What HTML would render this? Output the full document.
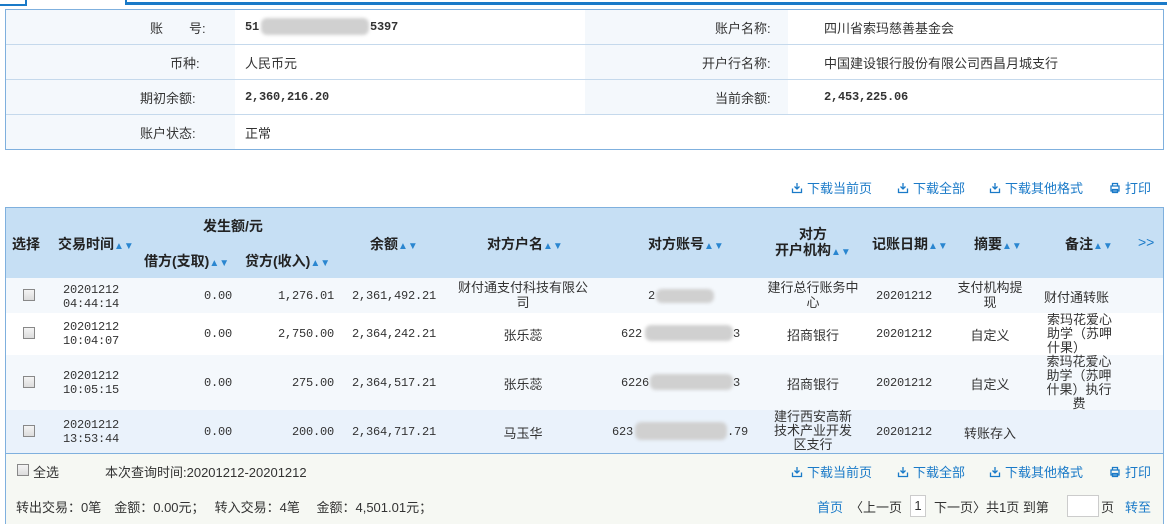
<!DOCTYPE html>
<html><head><meta charset="utf-8"><style>
*{margin:0;padding:0;box-sizing:border-box}
body{width:1167px;height:524px;background:#fff;position:relative;overflow:hidden;font-family:"Liberation Sans","Noto Sans CJK SC",sans-serif;font-size:13px;color:#333}
.a{position:absolute;white-space:nowrap}
.m{font-family:"Liberation Mono","Noto Sans CJK SC",monospace;font-size:12px;letter-spacing:-0.2px}
.b{font-weight:bold}
.lk{color:#1a7ac8}
.lk svg{vertical-align:-1px;margin-right:4px}
.cb{position:absolute;width:12px;height:12px;border:1px solid #888;background:linear-gradient(#f4f4f4,#dcdcdc)}
.blur{position:absolute;background:#d0d0d0;border-radius:6px;filter:blur(1.5px)}
.c{text-align:center}
.r{text-align:right}
.hd{font-weight:bold;color:#222;font-size:14px}
.ar{color:#2a86d0;font-size:10px}
</style></head><body>
<svg width="0" height="0" style="position:absolute">
<defs>
<symbol id="dl" viewBox="0 0 12 12"><path d="M6 1v6M3.5 4.5L6 7l2.5-2.5M1.5 6.5v4h9v-4" fill="none" stroke="#1a7ac8" stroke-width="1.3"/></symbol>
<symbol id="pr" viewBox="0 0 12 12"><path d="M3.5 4V1.5h5V4M2 4h8v5H2zM3.5 7.5h5v3h-5z" fill="none" stroke="#1a7ac8" stroke-width="1.3"/></symbol>
</defs></svg>
<!-- top tabs -->
<div class="a" style="left:0;top:0;width:27px;height:6px;border-right:2px solid #1a7ac8;border-bottom:2px solid #1a7ac8"></div>
<div class="a" style="left:125px;top:0;width:1042px;height:5px;border-left:2px solid #1a7ac8;border-bottom:3px solid #1a7ac8"></div>
<!-- info panel -->
<div class="a" style="left:5px;top:9px;width:1159px;height:141px;border:1px solid #7fb0de;background:#fff"></div>
<div class="a" style="left:6px;top:10px;width:229px;height:139px;background:#f4f8fc"></div>
<div class="a" style="left:585px;top:10px;width:203px;height:104px;background:#f4f8fc"></div>
<div class="a" style="left:6px;top:44px;width:1157px;height:1px;background:#c5d9ec"></div>
<div class="a" style="left:6px;top:79px;width:1157px;height:1px;background:#c5d9ec"></div>
<div class="a" style="left:6px;top:114px;width:1157px;height:1px;background:#c5d9ec"></div>
<div class="a" style="left:150px;top:18px">账　　号:</div>
<div class="a m b" style="left:245px;top:20px">51</div>
<div class="blur" style="left:261px;top:18px;width:108px;height:17px"></div>
<div class="a m b" style="left:370px;top:20px">5397</div>
<div class="a" style="left:170px;top:53px">币种:</div>
<div class="a" style="left:245px;top:53px">人民币元</div>
<div class="a" style="left:140px;top:88px">期初余额:</div>
<div class="a m b" style="left:245px;top:90px">2,360,216.20</div>
<div class="a" style="left:140px;top:123px">账户状态:</div>
<div class="a" style="left:245px;top:123px">正常</div>
<div class="a" style="left:715px;top:18px">账户名称:</div>
<div class="a" style="left:824px;top:18px">四川省索玛慈善基金会</div>
<div class="a" style="left:702px;top:53px">开户行名称:</div>
<div class="a" style="left:824px;top:53px">中国建设银行股份有限公司西昌月城支行</div>
<div class="a" style="left:715px;top:88px">当前余额:</div>
<div class="a m b" style="left:824px;top:90px">2,453,225.06</div>
<!-- download bar -->
<div class="a lk" style="left:791px;top:178px"><svg width="12" height="12"><use href="#dl"/></svg>下载当前页</div>
<div class="a lk" style="left:897px;top:178px"><svg width="12" height="12"><use href="#dl"/></svg>下载全部</div>
<div class="a lk" style="left:989px;top:178px"><svg width="12" height="12"><use href="#dl"/></svg>下载其他格式</div>
<div class="a lk" style="left:1109px;top:178px"><svg width="12" height="12"><use href="#pr"/></svg>打印</div>
<!-- table -->
<div class="a" style="left:5px;top:207px;width:1159px;height:317px;border:1px solid #7fb0de;border-bottom:none"></div>
<div class="a" style="left:6px;top:208px;width:1157px;height:70px;background:#c6dff4"></div>
<div class="a" style="left:6px;top:278px;width:1157px;height:35px;background:#f4f8fc"></div>
<div class="a" style="left:6px;top:355px;width:1157px;height:55px;background:#f4f8fc"></div>
<div class="a" style="left:6px;top:410px;width:1157px;height:43px;background:#eaf2fb"></div>
<div class="a" style="left:6px;top:453px;width:1157px;height:71px;background:#f6f8f3;border-top:1px solid #7fb0de"></div>
<!-- header -->
<div class="a hd" style="left:12px;top:234px">选择</div>
<div class="a hd" style="left:58px;top:234px">交易时间<span class="ar">▲▼</span></div>
<div class="a hd" style="left:203px;top:216px">发生额/元</div>
<div class="a hd" style="left:144px;top:251px">借方(支取)<span class="ar">▲▼</span></div>
<div class="a hd" style="left:245px;top:251px">贷方(收入)<span class="ar">▲▼</span></div>
<div class="a hd" style="left:370px;top:234px">余额<span class="ar">▲▼</span></div>
<div class="a hd" style="left:487px;top:234px">对方户名<span class="ar">▲▼</span></div>
<div class="a hd" style="left:648px;top:234px">对方账号<span class="ar">▲▼</span></div>
<div class="a hd c" style="left:775px;top:226px;line-height:16px">对方<br>开户机构<span class="ar">▲▼</span></div>
<div class="a hd" style="left:872px;top:234px">记账日期<span class="ar">▲▼</span></div>
<div class="a hd" style="left:974px;top:234px">摘要<span class="ar">▲▼</span></div>
<div class="a hd" style="left:1065px;top:234px">备注<span class="ar">▲▼</span></div>
<div class="a lk" style="left:1138px;top:234px;font-size:14px">&gt;&gt;</div>
<!-- rows -->
<div class="cb" style="left:23px;top:289px"></div>
<div class="a m" style="left:63px;top:283px;line-height:14px">20201212<br>04:44:14</div>
<div class="a m r" style="left:180px;top:289px;width:52px">0.00</div>
<div class="a m r" style="left:250px;top:289px;width:84px">1,276.01</div>
<div class="a m" style="left:352px;top:289px">2,361,492.21</div>
<div class="a c" style="left:448px;top:280px;width:150px;line-height:15px">财付通支付科技有限公</div>
<div class="a c" style="left:448px;top:295px;width:150px;line-height:15px">司</div>
<div class="a m" style="left:648px;top:289px">2</div>
<div class="blur" style="left:656px;top:289px;width:58px;height:14px"></div>
<div class="a c" style="left:765px;top:280px;width:96px;line-height:15px;white-space:normal">建行总行账务中心</div>
<div class="a m" style="left:876px;top:289px">20201212</div>
<div class="a c" style="left:955px;top:280px;width:70px;line-height:15px;white-space:normal">支付机构提现</div>
<div class="a" style="left:1044px;top:287px">财付通转账</div>

<div class="cb" style="left:23px;top:327px"></div>
<div class="a m" style="left:63px;top:320px;line-height:14px">20201212<br>10:04:07</div>
<div class="a m r" style="left:180px;top:327px;width:52px">0.00</div>
<div class="a m r" style="left:250px;top:327px;width:84px">2,750.00</div>
<div class="a m" style="left:352px;top:327px">2,364,242.21</div>
<div class="a c" style="left:448px;top:325px;width:150px">张乐蕊</div>
<div class="a m" style="left:621px;top:327px">622</div>
<div class="blur" style="left:645px;top:325px;width:88px;height:16px"></div>
<div class="a m" style="left:733px;top:327px">3</div>
<div class="a c" style="left:765px;top:325px;width:96px">招商银行</div>
<div class="a m" style="left:876px;top:327px">20201212</div>
<div class="a c" style="left:955px;top:325px;width:70px">自定义</div>
<div class="a" style="left:1047px;top:313px;line-height:14px;height:42px;overflow:hidden">索玛花爱心<br>助学（苏呷<br>什果）</div>

<div class="cb" style="left:23px;top:376px"></div>
<div class="a m" style="left:63px;top:369px;line-height:14px">20201212<br>10:05:15</div>
<div class="a m r" style="left:180px;top:376px;width:52px">0.00</div>
<div class="a m r" style="left:250px;top:376px;width:84px">275.00</div>
<div class="a m" style="left:352px;top:376px">2,364,517.21</div>
<div class="a c" style="left:448px;top:374px;width:150px">张乐蕊</div>
<div class="a m" style="left:621px;top:376px">6226</div>
<div class="blur" style="left:650px;top:374px;width:83px;height:16px"></div>
<div class="a m" style="left:733px;top:376px">3</div>
<div class="a c" style="left:765px;top:374px;width:96px">招商银行</div>
<div class="a m" style="left:876px;top:376px">20201212</div>
<div class="a c" style="left:955px;top:374px;width:70px">自定义</div>
<div class="a c" style="left:1045px;top:355px;width:68px;line-height:14px">索玛花爱心<br>助学（苏呷<br>什果）执行<br>费</div>

<div class="cb" style="left:23px;top:425px"></div>
<div class="a m" style="left:63px;top:418px;line-height:14px">20201212<br>13:53:44</div>
<div class="a m r" style="left:180px;top:425px;width:52px">0.00</div>
<div class="a m r" style="left:250px;top:425px;width:84px">200.00</div>
<div class="a m" style="left:352px;top:425px">2,364,717.21</div>
<div class="a c" style="left:448px;top:423px;width:150px">马玉华</div>
<div class="a m" style="left:612px;top:425px">623</div>
<div class="blur" style="left:635px;top:422px;width:92px;height:18px"></div>
<div class="a m" style="left:727px;top:425px">.79</div>
<div class="a c" style="left:769px;top:410px;width:88px;line-height:14px">建行西安高新<br>技术产业开发<br>区支行</div>
<div class="a m" style="left:876px;top:425px">20201212</div>
<div class="a c" style="left:955px;top:423px;width:70px">转账存入</div>
<!-- footer -->
<div class="cb" style="left:17px;top:464px"></div>
<div class="a" style="left:33px;top:462px">全选</div>
<div class="a" style="left:105px;top:462px">本次查询时间:20201212-20201212</div>
<div class="a lk" style="left:791px;top:462px"><svg width="12" height="12"><use href="#dl"/></svg>下载当前页</div>
<div class="a lk" style="left:897px;top:462px"><svg width="12" height="12"><use href="#dl"/></svg>下载全部</div>
<div class="a lk" style="left:989px;top:462px"><svg width="12" height="12"><use href="#dl"/></svg>下载其他格式</div>
<div class="a lk" style="left:1109px;top:462px"><svg width="12" height="12"><use href="#pr"/></svg>打印</div>
<div class="a" style="left:16px;top:497px">转出交易：0笔　金额：0.00元；　 转入交易：4笔　 金额：4,501.01元；</div>
<div class="a lk" style="left:817px;top:497px">首页</div>
<div class="a" style="left:850px;top:497px">〈上一页</div>
<div class="a" style="left:910px;top:495px;width:16px;height:22px;border:1px solid #ccc;background:#fff;text-align:center;line-height:20px">1</div>
<div class="a" style="left:934px;top:497px">下一页〉共1页 到第</div>
<div class="a" style="left:1067px;top:495px;width:32px;height:22px;border:1px solid #ccc;background:#fff"></div>
<div class="a" style="left:1101px;top:497px">页</div>
<div class="a lk" style="left:1125px;top:497px">转至</div>
</body></html>
